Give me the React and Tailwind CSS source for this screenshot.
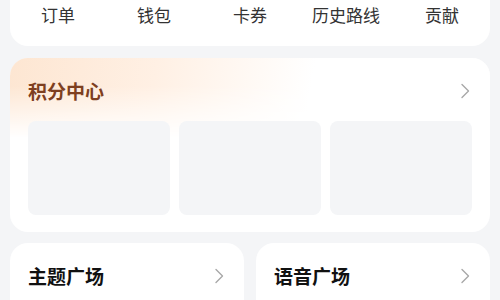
const TABS = ['订单', '钱包', '卡券', '历史路线', '贡献']

function Chevron() {
  return (
    <svg width="10" height="16" viewBox="0 0 10 16" fill="none" className="mr-[2px]">
      <path d="M2 1.5 L8.5 8 L2 14.5" stroke="#a8a8a8" strokeWidth="1.4" strokeLinecap="round" strokeLinejoin="round" />
    </svg>
  )
}

export default function App() {
  return (
    <div
      className="w-[500px] h-[300px] overflow-hidden bg-[#f4f5f7] px-[10px]"
      style={{ fontFamily: '"Noto Sans CJK SC", "Noto Sans", sans-serif' }}
    >
      {/* Quick entries */}
      <div className="-mt-4 h-[62px] bg-white rounded-b-[18px] pt-4 grid grid-cols-5">
        {TABS.map((t) => (
          <div key={t} className="flex justify-center items-start pt-[2px] text-[17px] leading-[26px] text-[#333]">
            {t}
          </div>
        ))}
      </div>

      {/* Points center */}
      <div className="mt-3 h-[174px] bg-white rounded-[18px] overflow-hidden relative">
        <div className="absolute inset-x-0 top-0 h-[80px] bg-[linear-gradient(100deg,#fde6d2_0%,#fff0e4_30%,#ffffff_62%)] [mask-image:linear-gradient(to_bottom,black_35%,transparent_100%)]" />
        <div className="relative px-[18px] pt-[19px] flex items-center justify-between">
          <span className="text-[19px] leading-[28px] font-bold text-[#7e3f20]">积分中心</span>
          <Chevron />
        </div>
        <div className="relative mt-[16px] px-[18px] grid grid-cols-3 gap-[9px]">
          <div className="h-[94px] rounded-[8px] bg-[#f4f5f7]" />
          <div className="h-[94px] rounded-[8px] bg-[#f4f5f7]" />
          <div className="h-[94px] rounded-[8px] bg-[#f4f5f7]" />
        </div>
      </div>

      {/* Squares */}
      <div className="mt-[11px] grid grid-cols-2 gap-[12px]">
        <div className="h-[80px] bg-white rounded-[18px] px-[18px] pt-[19px]">
          <div className="flex items-center justify-between">
            <span className="text-[19px] leading-[28px] font-bold text-[#111]">主题广场</span>
            <Chevron />
          </div>
        </div>
        <div className="h-[80px] bg-white rounded-[18px] px-[18px] pt-[19px]">
          <div className="flex items-center justify-between">
            <span className="text-[19px] leading-[28px] font-bold text-[#111]">语音广场</span>
            <Chevron />
          </div>
        </div>
      </div>
    </div>
  )
}
